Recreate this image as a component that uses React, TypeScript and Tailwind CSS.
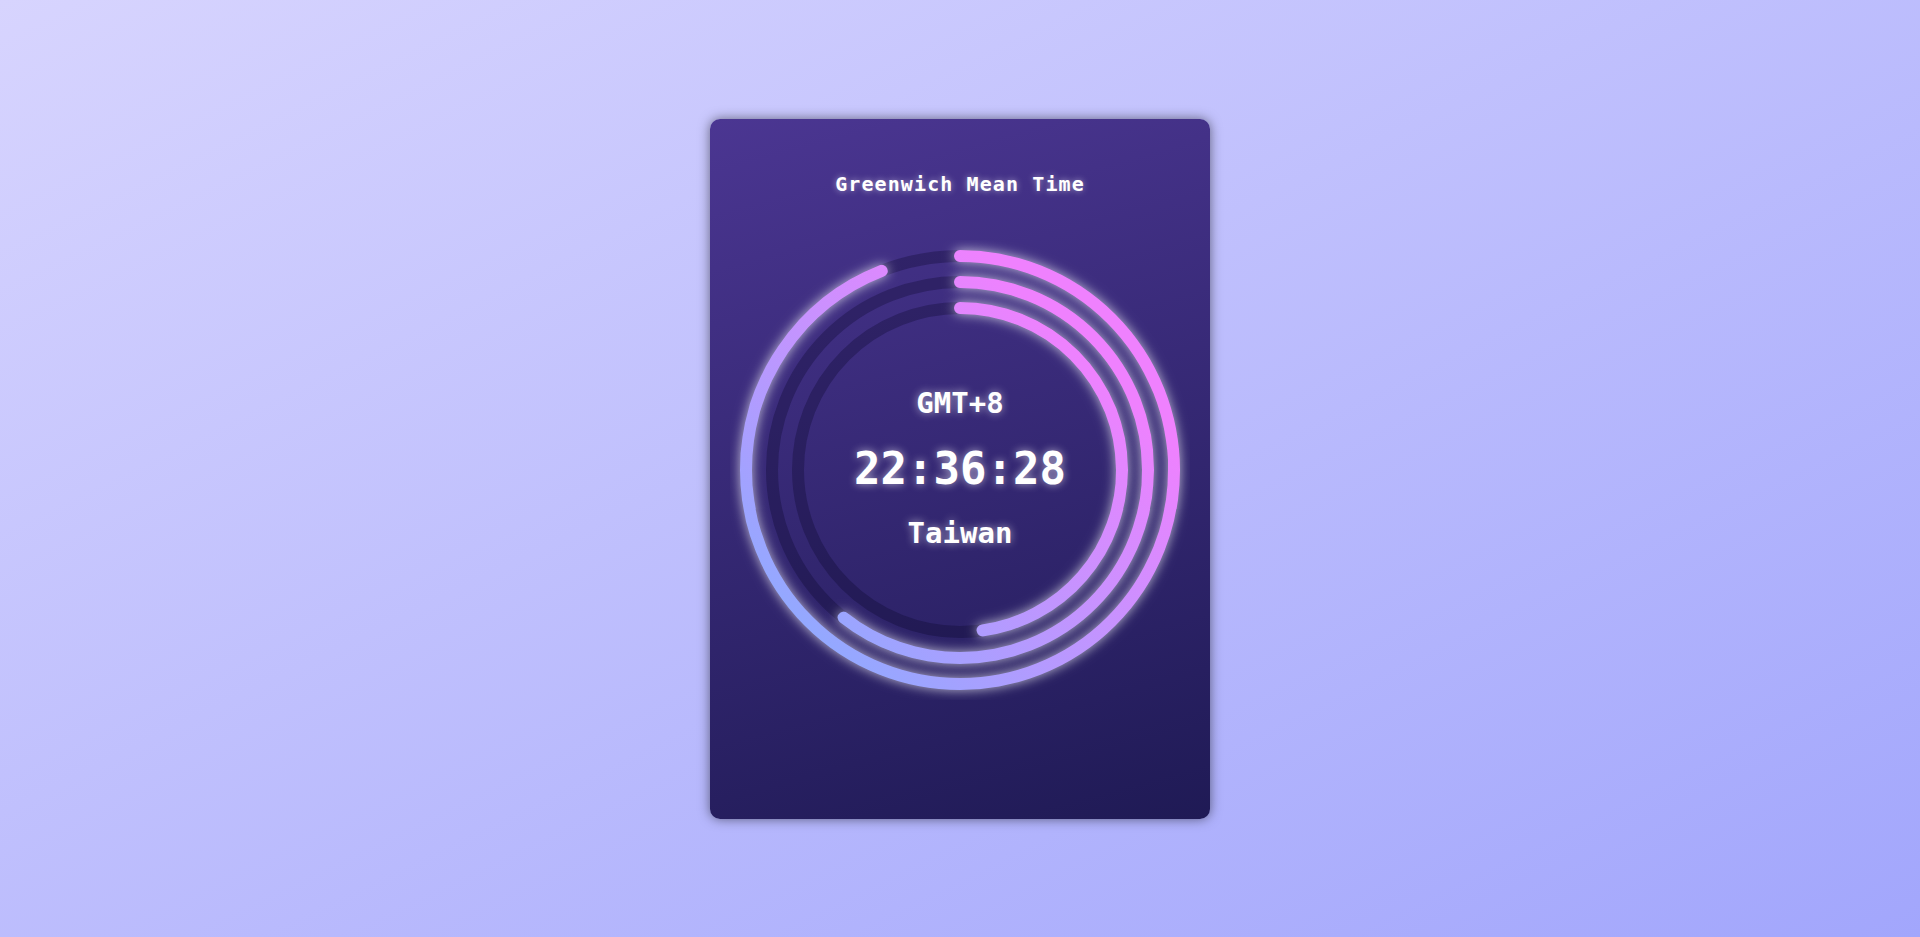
import React from 'react';

const CX = 230;
const CY = 230;

interface RingProps {
  r: number;
  fraction: number;
}

const Ring: React.FC<RingProps> = ({ r, fraction }) => {
  const circ = 2 * Math.PI * r;
  return (
    <>
      <circle cx={CX} cy={CY} r={r} fill="none" stroke="rgba(10,5,40,0.3)" strokeWidth={12} />
      <circle
        cx={CX}
        cy={CY}
        r={r}
        fill="none"
        stroke="url(#ringGradient)"
        strokeWidth={12}
        strokeLinecap="round"
        strokeDasharray={`${circ * fraction} ${circ}`}
        transform={`rotate(-90 ${CX} ${CY})`}
        className="[filter:drop-shadow(0_0_6px_rgba(255,255,255,0.7))]"
      />
    </>
  );
};

const App: React.FC = () => {
  const hours = 0.94;
  const minutes = 0.606;
  const seconds = 0.4775;

  return (
    <div className="min-h-screen w-full flex items-center justify-center bg-[linear-gradient(to_bottom_right,#d7d4fe,#a2a6fc)] font-['DejaVu_Sans_Mono',monospace]">
      <div className="w-[500px] h-[700px] rounded-[10px] flex flex-col items-center bg-[linear-gradient(165deg,#4b3692,#1f1a55)] shadow-[0_0_12px_rgba(0,0,0,0.5)]">
        <h1 className="mt-[52px] text-[20px] leading-[27px] font-bold tracking-[1.1px] text-white [text-shadow:0_0_6px_rgba(255,255,255,0.5)]">
          Greenwich Mean Time
        </h1>

        <div className="relative mt-[42px] w-[460px] h-[460px]">
          <svg width="460" height="460" viewBox="0 0 460 460">
            <defs>
              {/* coordinates are pre-rotation: rings are turned -90deg */}
              <linearGradient id="ringGradient" gradientUnits="userSpaceOnUse" x1="430" y1="430" x2="30" y2="30">
                <stop offset="0.2" stopColor="#ef81fe" />
                <stop offset="0.9" stopColor="#92a9ff" />
              </linearGradient>
            </defs>
            <Ring r={214} fraction={hours} />
            <Ring r={188} fraction={minutes} />
            <Ring r={162} fraction={seconds} />
          </svg>

          <div className="absolute inset-0 pb-[3px] flex flex-col items-center justify-center text-white font-bold [text-shadow:0_0_8px_rgba(255,255,255,0.6)]">
            <div className="text-[29px] leading-[34px] mb-[23px]">GMT+8</div>
            <div className="text-[44px] leading-[52px] mb-[21px]">22:36:28</div>
            <div className="text-[29px] leading-[34px]">Taiwan</div>
          </div>
        </div>
      </div>
    </div>
  );
};

export default App;
